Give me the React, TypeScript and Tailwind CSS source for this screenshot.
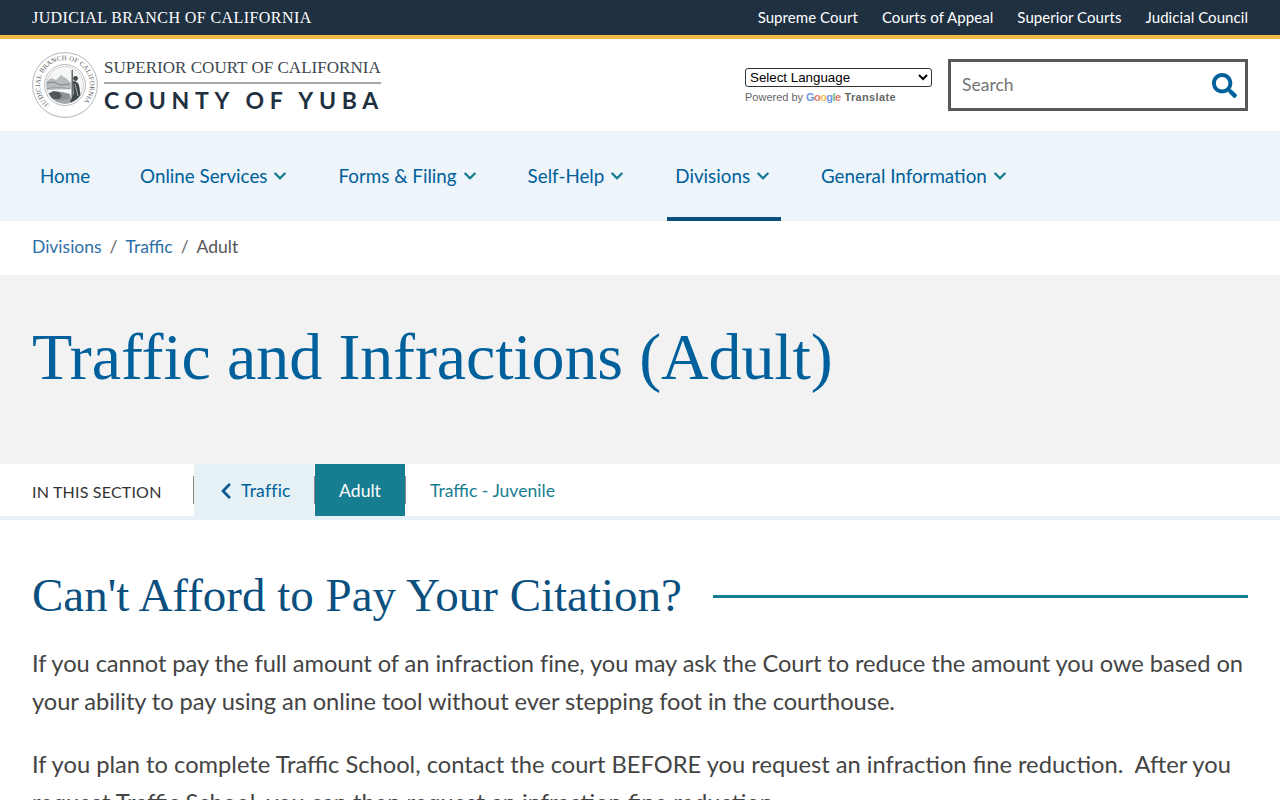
import { FaChevronDown, FaChevronLeft, FaSearch } from 'react-icons/fa'

const topLinks = ['Supreme Court', 'Courts of Appeal', 'Superior Courts', 'Judicial Council']

const navItems = [
  { label: 'Home', menu: false, active: false },
  { label: 'Online Services', menu: true, active: false },
  { label: 'Forms & Filing', menu: true, active: false },
  { label: 'Self-Help', menu: true, active: false },
  { label: 'Divisions', menu: true, active: true },
  { label: 'General Information', menu: true, active: false },
]

const Seal = () => (
  <svg width="66" height="66" viewBox="0 0 66 66" className="shrink-0">
    <defs>
      <path id="seal-ring" d="M 16.9 52.2 A 25 25 0 1 1 49.1 52.2" />
      <clipPath id="seal-inner">
        <circle cx="33" cy="33" r="18.5" />
      </clipPath>
    </defs>
    <circle cx="33" cy="33" r="32.4" fill="#fff" stroke="#8f9599" strokeWidth="0.7" />
    <text fontSize="6.8" fill="#565c61" fontFamily="'Liberation Serif', serif">
      <textPath href="#seal-ring" textLength="118">
        JUDICIAL BRANCH OF CALIFORNIA
      </textPath>
    </text>
    <circle cx="33" cy="33" r="20.5" fill="#fff" stroke="#868c90" strokeWidth="0.6" />
    <circle cx="33" cy="33" r="18.5" fill="#f5f6f6" stroke="#a5aaad" strokeWidth="1" strokeDasharray="1 0.8" />
    <g clipPath="url(#seal-inner)">
      <path d="M14 30 L19 26 L24 28 L29 23 L35 27 L39 31 L39 37 L14 38 Z" fill="#b7bbbe" />
      <path d="M14 31 L22 30 L28 33 L38 32" fill="none" stroke="#70767a" strokeWidth="0.8" />
      <path d="M14 37 Q24 34 38 37" fill="none" stroke="#8a9094" strokeWidth="0.7" />
      <path d="M14 42 Q24 37 38 42 L40 54 L14 54 Z" fill="#8b9195" />
      <path d="M17 42 L21 39 L27 40 L30 44 L27 47 L20 47 Z" fill="#50575b" />
      <path d="M14 48 L24 49 L38 47 L38 52 L18 52 Z" fill="#a3a8ab" />
      <path d="M39.6 18 L40.8 18 L40.8 47 L39.6 47 Z" fill="#3f464a" />
      <path d="M41 29 Q47 29 47.5 36 L49 46 L46 51 L38 50 L41.5 42 Z" fill="#41484c" />
      <path d="M43 32 L46 44" stroke="#d9dcdd" strokeWidth="0.7" />
      <circle cx="43.5" cy="26.5" r="2.4" fill="#41484c" />
    </g>
  </svg>
)

const GoogleWord = () => (
  <span className="font-['Liberation_Sans',sans-serif] text-[11px] font-bold tracking-[-0.6px]">
    <span className="text-[#6d9bea]">G</span>
    <span className="text-[#e8776c]">o</span>
    <span className="text-[#efc24f]">o</span>
    <span className="text-[#6d9bea]">g</span>
    <span className="text-[#6fb983]">l</span>
    <span className="text-[#e8776c]">e</span>
  </span>
)

const App = () => {
  return (
    <div className="h-screen w-full overflow-hidden bg-white font-['Lato',sans-serif] text-[#444]">
      <div className="flex h-[39px] items-center justify-between border-b-4 border-[#f0b944] bg-[#1f3041] px-8 text-white">
        <span className="font-['Liberation_Serif',serif] text-[16px] tracking-[0.42px]">
          JUDICIAL BRANCH OF CALIFORNIA
        </span>
        <div className="flex gap-6 text-[15px] tracking-[0.06px]">
          {topLinks.map((link) => (
            <a key={link}>{link}</a>
          ))}
        </div>
      </div>

      <header className="flex h-[92px] items-center justify-between px-8">
        <div className="flex items-center gap-1.5">
          <Seal />
          <div className="flex w-[277px] flex-col">
            <span className="border-b-2 border-[#a5a9ad] pb-[3px] font-['Liberation_Serif',serif] text-[17px] leading-[22px] tracking-[0.03px] whitespace-nowrap text-[#3c4650]">
              SUPERIOR COURT OF CALIFORNIA
            </span>
            <span className="pt-[3px] text-[23px] leading-[26px] font-bold tracking-[5.7px] whitespace-nowrap text-[#1f3041]">
              COUNTY OF YUBA
            </span>
          </div>
        </div>
        <div className="flex items-center gap-4">
          <div className="flex w-[187px] flex-col pt-[1px]">
            <select className="h-[19px] w-[187px] rounded-[3px] border border-[#333] bg-white font-['Liberation_Sans',sans-serif] text-[13.33px] leading-none text-black">
              <option>Select Language</option>
            </select>
            <span className="mt-[3px] flex items-center gap-[3px] font-['Liberation_Sans',sans-serif] text-[11px] leading-[14px] text-[#666]">
              Powered by <GoogleWord />
              <span className="ml-[1px] font-bold tracking-[0.35px]">Translate</span>
            </span>
          </div>
          <div className="flex h-[52px] w-[300px] items-center justify-between border-[3px] border-[#595959] pr-[8px] pl-[11px]">
            <span className="text-[17.5px] text-[#757575]">Search</span>
            <FaSearch size={25} className="text-[#00609c]" />
          </div>
        </div>
      </header>

      <nav className="flex h-[90px] items-stretch gap-8 bg-[#edf4fa] pl-8 text-[18.8px] text-[#00609c]">
        {navItems.map((item) => (
          <a
            key={item.label}
            className={`flex items-center gap-[6px] border-b-4 pt-1 pl-2 ${
              item.menu ? 'pr-[11px]' : 'pr-[10px]'
            } ${item.active ? 'border-[#0b4f7f]' : 'border-transparent'}`}
          >
            {item.label}
            {item.menu && <FaChevronDown size={14} className="text-[#15798f]" />}
          </a>
        ))}
      </nav>

      <div className="flex h-[54px] items-center gap-2 px-8 pb-[2px] text-[17.5px] text-[#2f6fa8]">
        <a>Divisions</a>
        <span className="text-[#666]">/</span>
        <a>Traffic</a>
        <span className="text-[#666]">/</span>
        <span className="text-[#555]">Adult</span>
      </div>

      <section className="flex h-[189px] items-center bg-[#f2f2f2] px-8 pb-[26px]">
        <h1 className="font-['Liberation_Serif',serif] text-[66px] leading-none tracking-[-0.13px] text-[#00609c]">
          Traffic and Infractions (Adult)
        </h1>
      </section>

      <div className="flex h-[56px] items-start border-b-4 border-[#e5f1f4]">
        <span className="ml-8 flex h-[52px] w-[161px] items-center pt-[4px] text-[16px] tracking-[0.2px] text-[#333]">
          IN THIS SECTION
        </span>
        <div className="mt-[12px] h-[28px] w-px bg-[#888]" />
        <a className="flex h-[56px] w-[120px] items-center gap-[6px] bg-[#e5f1f4] pb-[2px] pl-[23px] text-[17.6px] tracking-[0.2px] text-[#00609c]">
          <FaChevronLeft size={18} className="text-[#0b5a92]" />
          Traffic
        </a>
        <div className="mt-[12px] h-[28px] w-px bg-[#888]" />
        <a className="flex h-[52px] w-[90px] items-center justify-center bg-[#177d91] pt-[2px] text-[17.6px] text-white">
          Adult
        </a>
        <div className="mt-[12px] h-[28px] w-px bg-[#888]" />
        <a className="flex h-[52px] items-center pt-[2px] pl-[24px] text-[17.6px] text-[#177d91]">
          Traffic - Juvenile
        </a>
      </div>

      <main className="px-8 pt-[49px]">
        <div className="flex items-center gap-[31px]">
          <h2 className="font-['Liberation_Serif',serif] text-[47px] leading-[52px] whitespace-nowrap text-[#0b4f7f]">
            Can't Afford to Pay Your Citation?
          </h2>
          <div className="mt-[2px] h-[3px] flex-1 bg-[#177d91]" />
        </div>
        <p className="mt-[24px] text-[23.7px] leading-[37.6px] tracking-[-0.08px]">
          If you cannot pay the full amount of an infraction fine, you may ask the Court to reduce
          the amount you owe based on your ability to pay using an online tool without ever stepping
          foot in the courthouse.
        </p>
        <p className="mt-[26px] text-[23.7px] leading-[37.6px]">
          If you plan to complete Traffic School, contact the court BEFORE you request an infraction
          fine reduction.&nbsp; After you request Traffic School, you can then request an infraction
          fine reduction.
        </p>
      </main>
    </div>
  )
}

export default App
